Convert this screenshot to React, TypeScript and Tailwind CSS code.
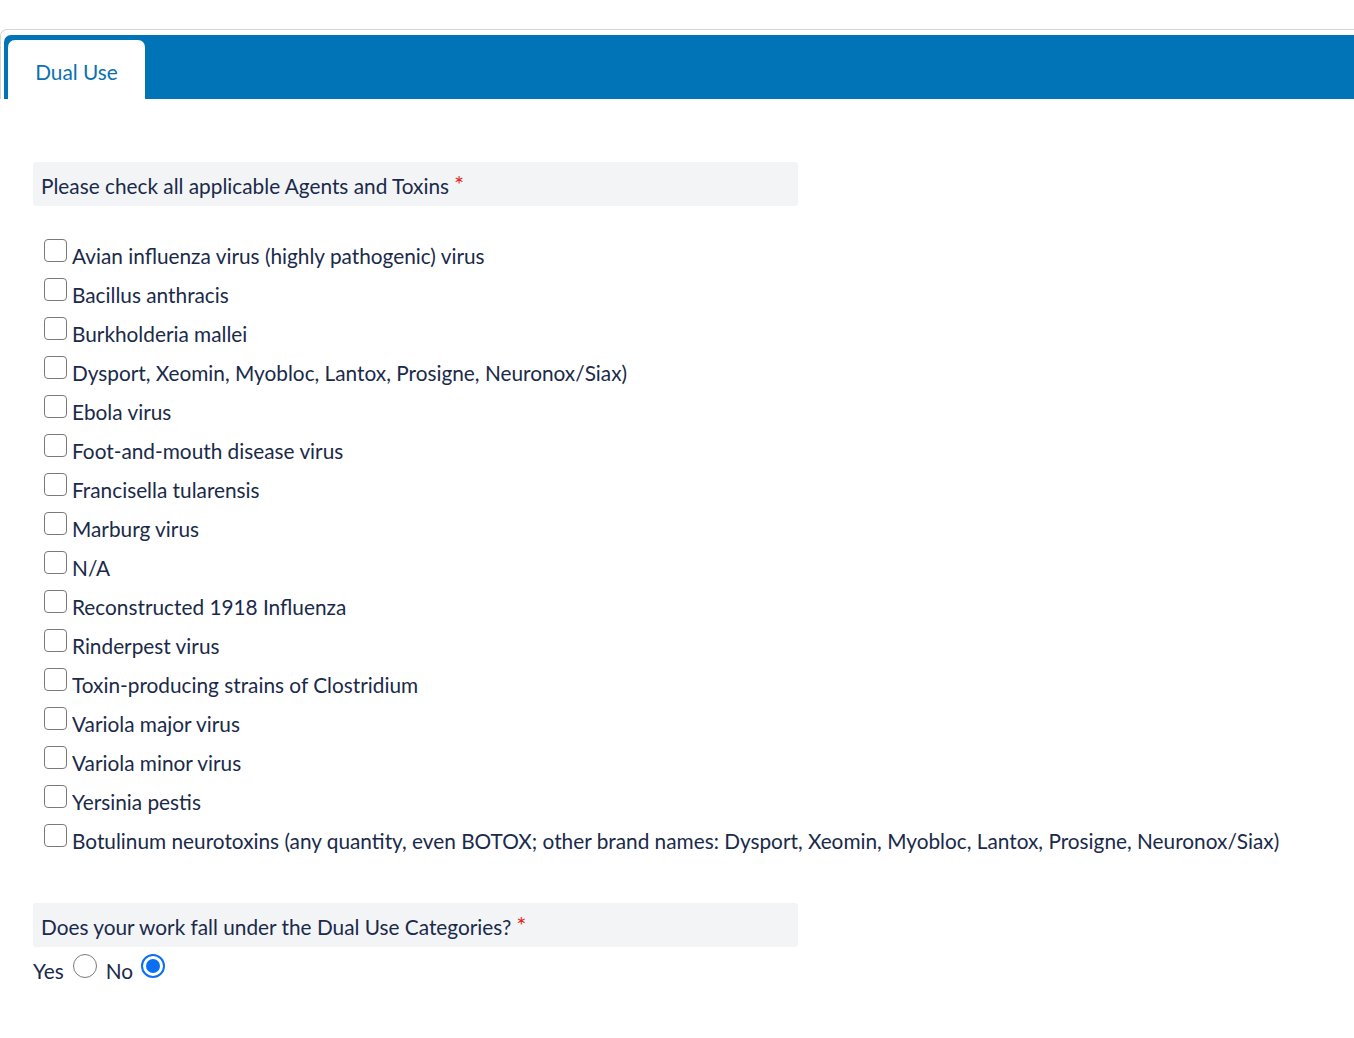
const agents = [
  "Avian influenza virus (highly pathogenic) virus",
  "Bacillus anthracis",
  "Burkholderia mallei",
  "Dysport, Xeomin, Myobloc, Lantox, Prosigne, Neuronox/Siax)",
  "Ebola virus",
  "Foot-and-mouth disease virus",
  "Francisella tularensis",
  "Marburg virus",
  "N/A",
  "Reconstructed 1918 Influenza",
  "Rinderpest virus",
  "Toxin-producing strains of Clostridium",
  "Variola major virus",
  "Variola minor virus",
  "Yersinia pestis",
  "Botulinum neurotoxins (any quantity, even BOTOX; other brand names: Dysport, Xeomin, Myobloc, Lantox, Prosigne, Neuronox/Siax)",
];

function QuestionHeader({ text }: { text: string }) {
  return (
    <div className="w-[765px] h-[44px] bg-[#f3f4f6] rounded-[3px] pl-[8px] pt-[3px] flex items-center">
      <span>{text}</span>
      <span className="text-[#e8281e] text-[24px] ml-[5px] self-start mt-[7px] leading-none">*</span>
    </div>
  );
}

export default function App() {
  return (
    <div className="min-h-[1038px] bg-white text-[20.8px] text-[#1a2a4a]" style={{ fontFamily: "Lato, 'Open Sans', sans-serif" }}>
      <div className="pt-[29px]">
        <div className="border-t border-l border-[#d6d6d6] rounded-tl-[7px] pt-[5px] pl-[3px]">
          <div className="bg-[#0074b6] h-[64px] rounded-tl-[7px] pt-[5px] pl-[4px]">
            <div className="w-[137px] h-[59px] bg-white rounded-t-[7px] flex items-center justify-center pt-[5px] text-[#0a71b3]">
              Dual Use
            </div>
          </div>
        </div>
      </div>

      <div className="pl-[33px] pt-[63px]">
        <QuestionHeader text="Please check all applicable Agents and Toxins" />

        <div className="pt-[30px]">
          {agents.map((a) => (
            <label key={a} className="flex h-[39px] items-center">
              <span className="ml-[11px] mb-[11px] w-[23px] h-[23px] rounded-[4px] border-[1.5px] border-[#7a7a7a] bg-white shrink-0" />
              <span className="ml-[5px] whitespace-nowrap">{a}</span>
            </label>
          ))}
        </div>

        <div className="pt-[43px]">
          <QuestionHeader text="Does your work fall under the Dual Use Categories?" />
        </div>

        <div className="flex h-[48px] items-center">
          <span>Yes</span>
          <span className="ml-[9px] mb-[10px] w-[24px] h-[24px] rounded-full border border-[#7a7a7a] bg-white" />
          <span className="ml-[9px]">No</span>
          <span className="ml-[8px] mb-[10px] w-[24px] h-[24px] rounded-full border-[2px] border-[#0b6ff2] bg-white flex items-center justify-center">
            <span className="w-[14px] h-[14px] rounded-full bg-[#0b6ff2]" />
          </span>
        </div>
      </div>
    </div>
  );
}
